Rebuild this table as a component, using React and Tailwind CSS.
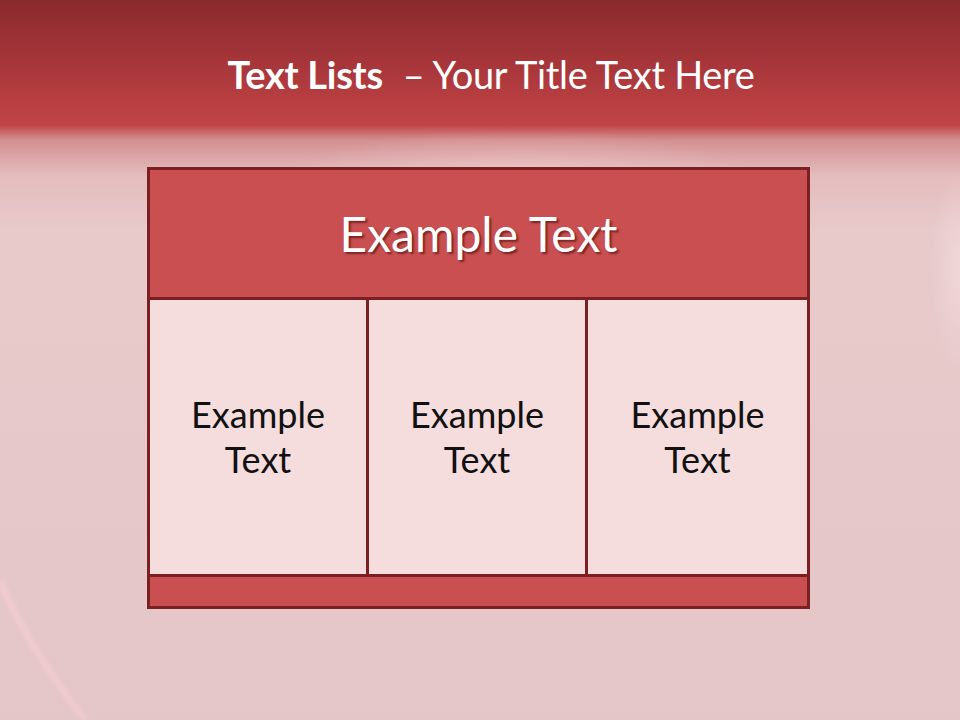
import React from 'react';

const cells = ['Example Text', 'Example Text', 'Example Text'];

const App = () => {
  return (
    <div
      className="relative w-[960px] h-[720px] overflow-hidden bg-[linear-gradient(180deg,#8a2a2d_0px,#a53539_60px,#c24446_125px,#d38f91_140px,#e4bcbd_175px,#e8cacb_230px,#e5c6c8_720px)]"
      style={{ fontFamily: 'Lato, "Open Sans", sans-serif' }}
    >
      {/* soft light glows */}
      <div className="absolute left-[260px] top-[130px] w-[520px] h-[120px] rounded-full bg-[radial-gradient(closest-side,rgba(255,225,228,0.45),rgba(255,225,228,0))]" />
      <div className="absolute right-[-30px] top-[170px] w-[60px] h-[200px] rounded-full bg-[radial-gradient(closest-side,rgba(255,240,242,0.35),rgba(255,240,242,0))]" />
      <svg className="absolute left-0 top-[560px] blur-[2px]" width="120" height="160" viewBox="0 0 120 160">
        <path d="M0 20 C 20 70, 50 115, 85 160" fill="none" stroke="#ffd2d6" strokeWidth="6" opacity="0.45" />
      </svg>

      <div className="relative flex flex-col">
        <div className="h-[128px] flex items-center justify-center pt-[20px] pl-[22px]">
          <h1 className="text-[38px] text-white tracking-[-0.3px]">
            <span className="font-bold">Text Lists</span>
            <span className="ml-[20px]">– Your Title Text Here</span>
          </h1>
        </div>

        <div className="mt-[39px] ml-[147px] w-[663px] border-[3px] border-[#7a1f22] flex flex-col">
          <div className="h-[130px] bg-[#c94f50] border-b-[3px] border-[#7a1f22] flex items-center justify-center">
            <span className="text-[48px] text-white [text-shadow:2px_2px_2px_rgba(60,0,0,0.55)]">
              Example Text
            </span>
          </div>
          <div className="h-[277px] grid grid-cols-3 bg-[#f5dcdd] border-b-[3px] border-[#7a1f22]">
            {cells.map((t, i) => (
              <div
                key={i}
                className={`flex items-center justify-center text-center text-[36px] leading-[45px] text-[#111] ${
                  i < 2 ? 'border-r-[3px] border-[#7a1f22]' : ''
                }`}
              >
                <span>Example<br />Text</span>
              </div>
            ))}
          </div>
          <div className="h-[29px] bg-[#c94f50]" />
        </div>
      </div>
    </div>
  );
};

export default App;
